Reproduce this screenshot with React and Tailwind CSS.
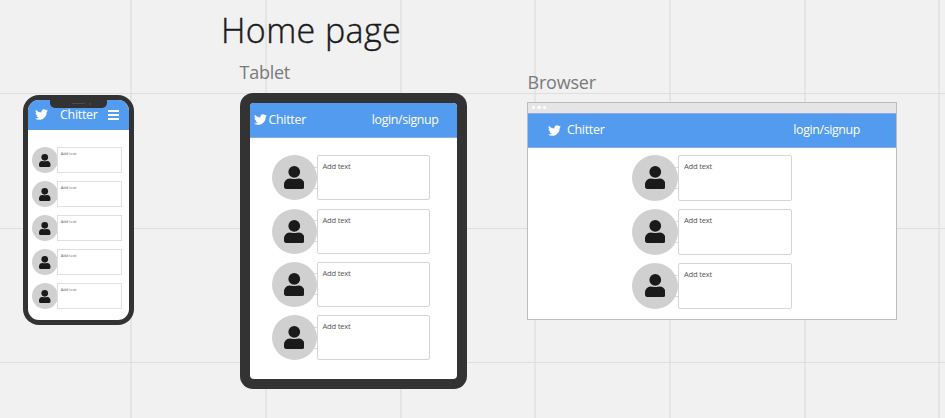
import React from "react";
import { FaTwitter } from "react-icons/fa";

const verticals = ["left-[130px]", "left-[265px]", "left-[400px]", "left-[534px]", "left-[669px]", "left-[804px]", "left-[938px]"];
const horizontals = ["top-[93px]", "top-[227.5px]", "top-[362px]"];

function BoardGrid() {
  return (
    <div>
      {verticals.map((c) => (
        <div key={c} className={`absolute top-0 h-full w-[2px] bg-[#e5e5e5] ${c}`} />
      ))}
      {horizontals.map((c) => (
        <div key={c} className={`absolute left-0 h-px w-full bg-[#dedede] ${c}`} />
      ))}
    </div>
  );
}

function UserIcon({ className }) {
  return (
    <svg viewBox="0 0 20.5 23" className={className} fill="#1a1a1a">
      <circle cx="10.25" cy="5.9" r="5.9" />
      <path d="M5.8 12.4 C7.4 12.5 8.2 13 10.25 13 C12.3 13 13.1 12.5 14.7 12.4 C18.3 12.4 20.5 15.4 20.5 18.8 V20.6 C20.5 22.2 19.7 23 18.2 23 H2.3 C0.8 23 0 22.2 0 20.6 V18.8 C0 15.4 2.2 12.4 5.8 12.4 Z" />
    </svg>
  );
}

function PhonePost() {
  return (
    <div className="flex h-[26px] items-center">
      <div className="flex size-[26px] shrink-0 items-center justify-center rounded-full bg-[#d0d0d0]">
        <UserIcon className="h-[13px] w-[11.5px]" />
      </div>
      <div className="-ml-px h-[26px] w-[65.5px] border border-[#dfdfdf] bg-white pl-[3px] pt-[2.5px] text-[4px] leading-[5px] text-[#666]">
        Add text
      </div>
    </div>
  );
}

function Post({ avatar, box }) {
  return (
    <div className="flex items-center">
      <div className={`relative z-10 flex shrink-0 items-center justify-center rounded-full bg-[#d0d0d0] ${avatar}`}>
        <UserIcon className="h-[23px] w-[20.5px]" />
      </div>
      <div className="-ml-1 h-[22px] w-1 shrink-0 border-y border-[#dcdcdc]" />
      <div className={`shrink-0 rounded-[2px] border border-[#d5d5d5] bg-white pl-[5px] pt-[5px] text-[7.6px] leading-[10px] tracking-[-0.2px] text-[#555] ${box}`}>
        Add text
      </div>
    </div>
  );
}

function Phone() {
  return (
    <div className="absolute left-[22.5px] top-[95px] h-[229.5px] w-[111.5px] rounded-[16px] bg-[#333] p-[5px]">
      <div className="relative h-full overflow-hidden rounded-[11px] bg-white">
        <div className="flex h-[29.5px] items-start bg-[#539bee] pl-[7px] text-white">
          <FaTwitter className="mt-[8px] size-[13px]" />
          <span className="ml-[12.5px] mt-[7px] w-[37.5px] text-[12.4px] leading-[16px] tracking-[-0.25px]">Chitter</span>
          <span className="ml-[10px] mt-[10px] flex h-[10px] w-[11px] flex-col justify-between">
            <i className="h-[2px] bg-white" />
            <i className="h-[2px] bg-white" />
            <i className="h-[2px] bg-white" />
          </span>
        </div>
        <div className="absolute left-[22.5px] top-[-1px] flex h-[9px] w-[57px] items-start justify-center gap-[4px] rounded-b-[5px] bg-[#333] pt-[3.5px]">
          <i className="ml-[6px] mt-[0.5px] h-px w-[13px] bg-[#4b4b4b]" />
          <i className="size-[2px] rounded-full bg-[#4b4b4b]" />
        </div>
        <div className="flex flex-col gap-[8px] pl-[4.3px] pt-[17.5px]">
          <PhonePost /><PhonePost /><PhonePost /><PhonePost /><PhonePost />
        </div>
      </div>
    </div>
  );
}

function Tablet() {
  return (
    <div className="absolute left-[240px] top-[92.5px] h-[296px] w-[227px] rounded-[13px] bg-[#333] p-[10px]">
      <div className="h-full overflow-hidden rounded-[4px] bg-white">
        <div className="flex h-[35.5px] items-center border-b border-[#8da8e4] bg-[#539bee] pl-[4px] pr-[18.5px] text-white">
          <FaTwitter className="size-[13px]" />
          <span className="ml-[1.5px] text-[12.4px] leading-[16px] tracking-[-0.27px]">Chitter</span>
          <span className="ml-auto text-[12.4px] leading-[16px] tracking-[-0.37px]">login/signup</span>
        </div>
        <div className="flex flex-col gap-[8.3px] pl-[21.5px] pt-[17.3px]">
          {[0, 1, 2, 3].map((n) => (
            <Post key={n} avatar="size-[45px]" box="h-[45px] w-[113px]" />
          ))}
        </div>
      </div>
    </div>
  );
}

function Browser() {
  return (
    <div className="absolute left-[527px] top-[101.5px] h-[218px] w-[369.5px] border border-[#bdbdbd] bg-white">
      <div className="flex h-[10px] items-center gap-[2px] bg-[#e5e5e5] pl-[3.5px]">
        <i className="size-[3.5px] rounded-full bg-white" />
        <i className="size-[3.5px] rounded-full bg-white" />
        <i className="size-[3.5px] rounded-full bg-white" />
      </div>
      <div className="flex h-[35px] items-center border-y border-[#8da8e4] bg-[#539bee] pl-[20px] pr-[35.5px] text-white">
        <FaTwitter className="size-[13px]" />
        <span className="ml-[6px] text-[12.4px] leading-[16px] tracking-[-0.27px]">Chitter</span>
        <span className="ml-auto text-[12.4px] leading-[16px] tracking-[-0.37px]">login/signup</span>
      </div>
      <div className="flex flex-col gap-[8px] pl-[104px] pt-[7.4px]">
        {[0, 1, 2].map((n) => (
          <Post key={n} avatar="size-[46px]" box="h-[46px] w-[114px]" />
        ))}
      </div>
    </div>
  );
}

export default function App() {
  return (
    <main className="relative h-[418px] w-[945px] overflow-hidden bg-[#f1f1f1] font-['Open_Sans',sans-serif]">
      <BoardGrid />
      <h1 className="absolute left-[221px] top-[6px] whitespace-nowrap text-[34px] font-light leading-[48px] tracking-[0.4px] text-[#1a1a1a] [-webkit-text-stroke:0.4px_#1a1a1a]">Home page</h1>
      <h2 className="absolute left-[239.5px] top-[60px] whitespace-nowrap text-[18px] leading-[24px] tracking-[-0.25px] text-[#7a7a7a]">Tablet</h2>
      <h2 className="absolute left-[527.5px] top-[70px] whitespace-nowrap text-[18px] leading-[24px] tracking-[-0.2px] text-[#7a7a7a]">Browser</h2>
      <Phone />
      <Tablet />
      <Browser />
    </main>
  );
}
